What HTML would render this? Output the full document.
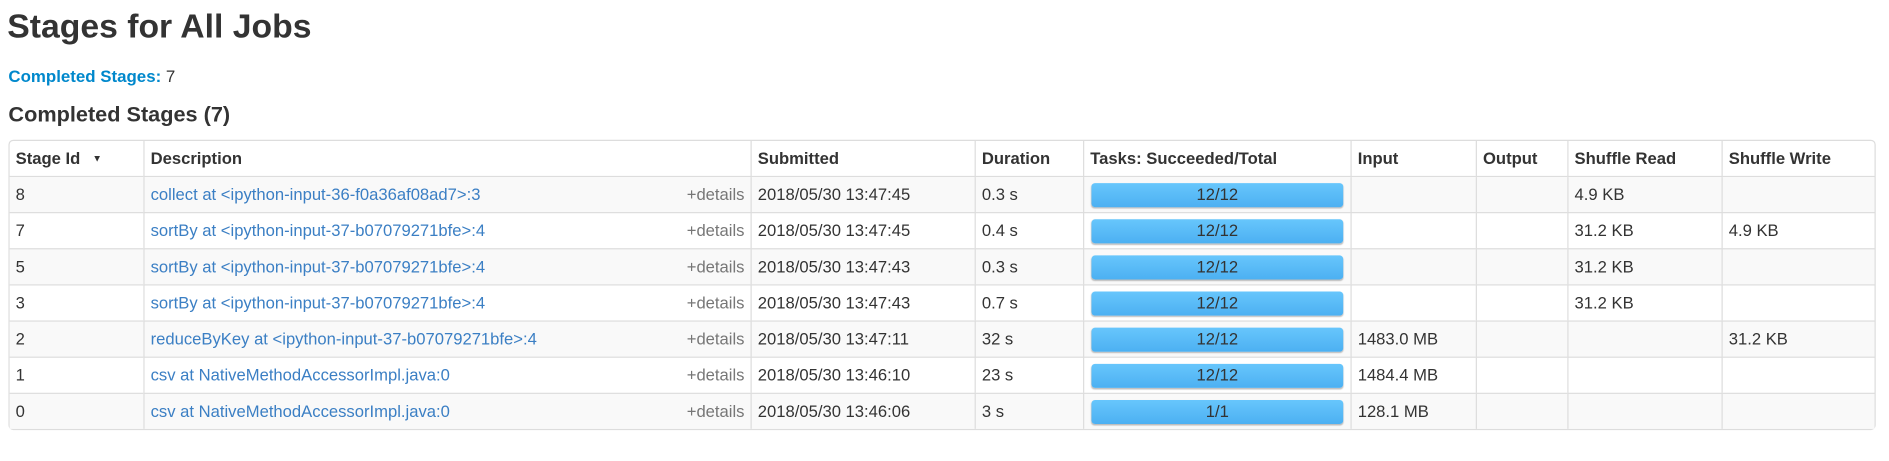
<!DOCTYPE html>
<html><head><meta charset="utf-8"><style>
html,body{margin:0;padding:0;background:#fff;width:1889px;height:461px;overflow:hidden}
#wrap{width:1568px;height:383px;transform:scale(1.2047);transform-origin:0 0;position:relative;font-family:"Liberation Sans",Arial,sans-serif;color:#333}
h3{position:absolute;left:6px;top:6px;margin:0;font-size:28px;font-weight:bold;color:#333}
.cs{position:absolute;left:7px;top:55px;font-size:14px}
.cs b{color:#0088cc}
h4{position:absolute;left:7px;top:85px;margin:0;font-size:18px;font-weight:bold}
table{position:absolute;left:7px;top:116px;width:1550px;border-collapse:separate;border-spacing:0;border:1px solid #ddd;border-radius:4px;font-size:13.8px;table-layout:fixed}
th,td{height:29px;padding:0 5px;border-left:1px solid #ddd;border-top:1px solid #ddd;text-align:left;white-space:nowrap;overflow:hidden}
th{font-weight:bold;border-top:none;height:29px;border-bottom:1px solid #ddd}
tbody tr:first-child td{border-top:none}
th:first-child,td:first-child{border-left:none}
tbody tr:nth-child(odd) td{background:#f9f9f9}
a{color:#3b7fc4;text-decoration:none}
.det{float:right;color:#777}
.bar{height:20px;margin:0 1px;border-radius:3px;background:linear-gradient(#67c6fc,#4cb0f2);box-shadow:0 1px 1px rgba(0,0,0,.25);text-align:center;line-height:20px;color:#333}
.tri{font-size:8px;margin-left:10px;vertical-align:2px}
</style></head><body><div id="wrap">
<h3>Stages for All Jobs</h3>
<div class="cs"><b>Completed Stages:</b> 7</div>
<h4>Completed Stages (7)</h4>
<table>
<colgroup><col style="width:111px"><col style="width:504px"><col style="width:186px"><col style="width:90px"><col style="width:222px"><col style="width:104px"><col style="width:76px"><col style="width:128px"><col></colgroup>
<thead><tr><th>Stage Id<span class="tri">▼</span></th><th>Description</th><th>Submitted</th><th>Duration</th><th>Tasks: Succeeded/Total</th><th>Input</th><th>Output</th><th>Shuffle Read</th><th>Shuffle Write</th></tr></thead>
<tbody>
<tr><td>8</td><td><a>collect at &lt;ipython-input-36-f0a36af08ad7&gt;:3</a><span class="det">+details</span></td><td>2018/05/30 13:47:45</td><td>0.3 s</td><td><div class="bar">12/12</div></td><td></td><td></td><td>4.9 KB</td><td></td></tr>
<tr><td>7</td><td><a>sortBy at &lt;ipython-input-37-b07079271bfe&gt;:4</a><span class="det">+details</span></td><td>2018/05/30 13:47:45</td><td>0.4 s</td><td><div class="bar">12/12</div></td><td></td><td></td><td>31.2 KB</td><td>4.9 KB</td></tr>
<tr><td>5</td><td><a>sortBy at &lt;ipython-input-37-b07079271bfe&gt;:4</a><span class="det">+details</span></td><td>2018/05/30 13:47:43</td><td>0.3 s</td><td><div class="bar">12/12</div></td><td></td><td></td><td>31.2 KB</td><td></td></tr>
<tr><td>3</td><td><a>sortBy at &lt;ipython-input-37-b07079271bfe&gt;:4</a><span class="det">+details</span></td><td>2018/05/30 13:47:43</td><td>0.7 s</td><td><div class="bar">12/12</div></td><td></td><td></td><td>31.2 KB</td><td></td></tr>
<tr><td>2</td><td><a>reduceByKey at &lt;ipython-input-37-b07079271bfe&gt;:4</a><span class="det">+details</span></td><td>2018/05/30 13:47:11</td><td>32 s</td><td><div class="bar">12/12</div></td><td>1483.0 MB</td><td></td><td></td><td>31.2 KB</td></tr>
<tr><td>1</td><td><a>csv at NativeMethodAccessorImpl.java:0</a><span class="det">+details</span></td><td>2018/05/30 13:46:10</td><td>23 s</td><td><div class="bar">12/12</div></td><td>1484.4 MB</td><td></td><td></td><td></td></tr>
<tr><td>0</td><td><a>csv at NativeMethodAccessorImpl.java:0</a><span class="det">+details</span></td><td>2018/05/30 13:46:06</td><td>3 s</td><td><div class="bar">1/1</div></td><td>128.1 MB</td><td></td><td></td><td></td></tr>
</tbody></table>
</div></body></html>
